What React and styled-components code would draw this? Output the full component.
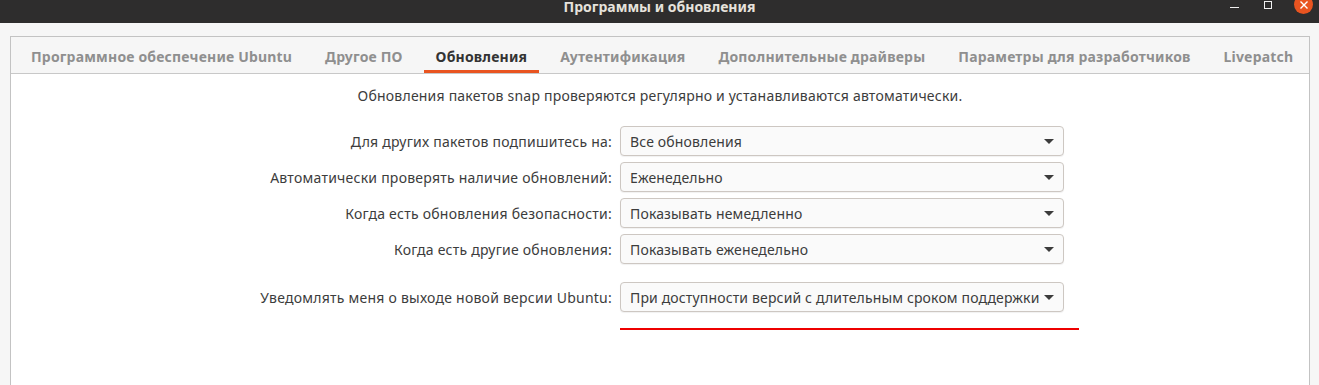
import React from "react"
import styled, { createGlobalStyle } from "styled-components"

const GlobalStyle = createGlobalStyle`
  html, body {
    margin: 0;
    padding: 0;
    background: #f6f6f6;
  }
  body {
    font-family: "Noto Sans", "Open Sans", sans-serif;
  }
`

const Window = styled.div`
  width: 1319px;
  height: 385px;
  display: flex;
  flex-direction: column;
  background: #f6f6f6;
  overflow: hidden;
`

const TitleBar = styled.div`
  height: 23px;
  flex: none;
  background: #2e2d2d;
  display: grid;
  grid-template-columns: 1fr auto 1fr;
  align-items: start;
`

const Title = styled.div`
  grid-column: 2;
  color: #e6e2dc;
  font-weight: 700;
  font-size: 14px;
  line-height: 16px;
  margin-top: -1px;
`

const Controls = styled.div`
  grid-column: 3;
  justify-self: end;
  display: flex;
  align-items: flex-start;
  margin-right: 6px;
`

const Minimize = styled.div`
  width: 9px;
  height: 1px;
  background: #f0f0f0;
  margin-top: 7px;
  margin-right: 25px;
`

const Maximize = styled.div`
  width: 6px;
  height: 6px;
  border: 1px solid #f0f0f0;
  margin-top: 1px;
  margin-right: 22px;
`

const Close = styled.div`
  width: 19px;
  height: 19px;
  border-radius: 50%;
  background: #e95420;
  margin-top: -5px;
  display: flex;
  align-items: center;
  justify-content: center;
`

const Frame = styled.div`
  flex: 1;
  margin: 13px 9px 0 10px;
  border: 1px solid #c3c3c3;
  border-bottom: none;
  display: flex;
  flex-direction: column;
`

const TabBar = styled.div`
  height: 36px;
  flex: none;
  display: flex;
  align-items: stretch;
  gap: 9px;
  padding-left: 8px;
  border-bottom: 1px solid #c8c8c8;
  background: #f6f6f6;
`

const Tab = styled.div`
  padding: 2px 12px 0;
  display: flex;
  align-items: center;
  font-size: 14px;
  font-weight: 700;
  letter-spacing: 0.18px;
  color: ${(p) => (p.$active ? "#333333" : "#8f8f8f")};
  box-shadow: ${(p) => (p.$active ? "inset 0 -3px 0 #e95420" : "none")};
  white-space: nowrap;
`

const Content = styled.div`
  flex: 1;
  background: #ffffff;
  padding-top: 12px;
`

const Notice = styled.div`
  text-align: center;
  font-size: 14px;
  line-height: 20px;
  letter-spacing: 0.21px;
  color: #3c3c3c;
  margin-bottom: 20px;
`

const Form = styled.div`
  display: grid;
  grid-template-columns: 601px 444px;
  column-gap: 8px;
  row-gap: 6px;
  align-items: center;
`

const Label = styled.div`
  text-align: right;
  font-size: 14px;
  letter-spacing: 0.24px;
  color: #3c3c3c;
  margin-top: ${(p) => (p.$spaced ? "12px" : "0")};
`

const Combo = styled.div`
  box-sizing: border-box;
  height: 30px;
  border: 1px solid #cdc7c2;
  border-radius: 4px;
  background: #fafafa;
  box-shadow: 0 1px 1px rgba(0, 0, 0, 0.06);
  display: flex;
  align-items: center;
  justify-content: space-between;
  padding: 0 9px;
  font-size: 14px;
  letter-spacing: 0.15px;
  color: #3c3c3c;
  margin-top: ${(p) => (p.$spaced ? "12px" : "0")};
`

const Arrow = styled.span`
  width: 0;
  height: 0;
  border-left: 5px solid transparent;
  border-right: 5px solid transparent;
  border-top: 5px solid #3c3c3c;
  margin-top: 1px;
`

const RedLine = styled.div`
  grid-column: 2;
  width: 459px;
  height: 2px;
  background: #ee0000;
  margin-top: 10px;
`

const tabs = [
  "Программное обеспечение Ubuntu",
  "Другое ПО",
  "Обновления",
  "Аутентификация",
  "Дополнительные драйверы",
  "Параметры для разработчиков",
  "Livepatch",
]

const rows = [
  ["Для других пакетов подпишитесь на:", "Все обновления"],
  ["Автоматически проверять наличие обновлений:", "Еженедельно"],
  ["Когда есть обновления безопасности:", "Показывать немедленно"],
  ["Когда есть другие обновления:", "Показывать еженедельно"],
  [
    "Уведомлять меня о выходе новой версии Ubuntu:",
    "При доступности версий с длительным сроком поддержки",
    true,
  ],
]

const App = () => {
  return (
    <Window>
      <GlobalStyle />
      <TitleBar>
        <Title>Программы и обновления</Title>
        <Controls>
          <Minimize />
          <Maximize />
          <Close>
            <svg width="10" height="10" viewBox="0 0 10 10">
              <path d="M1.5 1.5 L8.5 8.5 M8.5 1.5 L1.5 8.5" stroke="#fff" strokeWidth="1.4" />
            </svg>
          </Close>
        </Controls>
      </TitleBar>
      <Frame>
        <TabBar>
          {tabs.map((t) => (
            <Tab key={t} $active={t === "Обновления"}>
              {t}
            </Tab>
          ))}
        </TabBar>
        <Content>
          <Notice>
            Обновления пакетов snap проверяются регулярно и устанавливаются автоматически.
          </Notice>
          <Form>
            {rows.map(([label, value, spaced]) => (
              <React.Fragment key={label}>
                <Label $spaced={spaced}>{label}</Label>
                <Combo $spaced={spaced}>
                  <span>{value}</span>
                  <Arrow />
                </Combo>
              </React.Fragment>
            ))}
            <RedLine />
          </Form>
        </Content>
      </Frame>
    </Window>
  )
}

export default App
